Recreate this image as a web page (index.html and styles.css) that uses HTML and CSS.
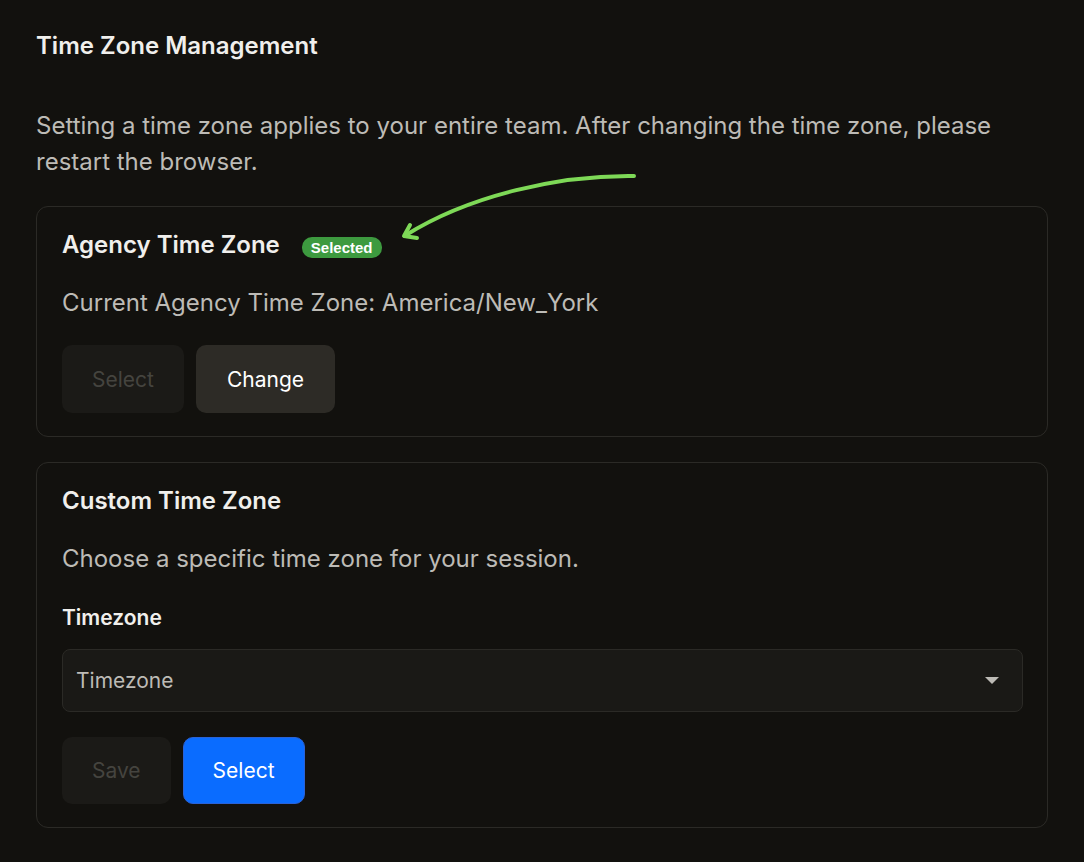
FILE: index.html
```html
<!DOCTYPE html>
<html lang="en">
<head>
    <meta charset="UTF-8">
    <meta name="viewport" content="width=device-width, initial-scale=1.0">
    <title>Time Zone Management</title>
    <link rel="stylesheet" href="styles.css">
</head>
<body>

<div class="page">
    <h1 class="page-title">Time Zone Management</h1>
    <p class="intro">Setting a time zone applies to your entire team. After changing the time zone, please restart the browser.</p>

    <svg class="hint-arrow" width="260" height="85" viewBox="0 0 260 85" fill="none">
        <path d="M244 11 C170 10 80 30 16 70" stroke="#7ed957" stroke-width="4" stroke-linecap="round"/>
        <path d="M20 60 L14 71 L27 73" stroke="#7ed957" stroke-width="4" stroke-linecap="round" stroke-linejoin="round"/>
    </svg>

    <div class="card">
        <div class="card-head">
            <h2>Agency Time Zone</h2>
            <span class="badge">Selected</span>
        </div>
        <p class="card-text">Current Agency Time Zone: America/New_York</p>
        <div class="actions">
            <button class="btn btn-disabled" disabled>Select</button>
            <button class="btn btn-dark">Change</button>
        </div>
    </div>

    <div class="card">
        <div class="card-head">
            <h2>Custom Time Zone</h2>
        </div>
        <p class="card-text">Choose a specific time zone for your session.</p>
        <label class="field-label">Timezone</label>
        <div class="select-box">
            <span>Timezone</span>
            <svg width="14" height="8" viewBox="0 0 14 8"><path d="M0 0 H14 L7 7 Z" fill="#bdbbb6"/></svg>
        </div>
        <div class="actions actions-low">
            <button class="btn btn-disabled btn-save" disabled>Save</button>
            <button class="btn btn-blue">Select</button>
        </div>
    </div>
</div>

</body>
</html>
```

FILE: styles.css
```css
body {
    margin: 0;
    background-color: #12110e;
    font-family: Inter, "Noto Sans", sans-serif;
    color: #f0efec;
}
.page {
    position: relative;
    padding: 32px 36px 34px 36px;
}
.page-title {
    margin: 0;
    font-size: 24px;
    line-height: 28px;
    font-weight: 600;
    color: #f0efec;
}
.intro {
    margin: 48px 0 26px;
    font-size: 24px;
    line-height: 36px;
    color: #bdbbb6;
}
.hint-arrow {
    position: absolute;
    left: 390px;
    top: 165px;
}
.card {
    border: 1px solid #2b2a26;
    border-radius: 12px;
    padding: 24px 24px 23px 25px;
    margin-bottom: 25px;
}
.card-head {
    display: flex;
    align-items: center;
    gap: 22px;
}
.card-head h2 {
    margin: 0;
    font-size: 24px;
    line-height: 28px;
    font-weight: 600;
}
.badge {
    background-color: #3d9a3f;
    color: #ffffff;
    font-family: "Liberation Sans", Arial, sans-serif;
    font-weight: bold;
    font-size: 15px;
    line-height: 21px;
    height: 21px;
    padding: 0 9px;
    border-radius: 10px;
    margin-top: 4px;
}
.card-text {
    margin: 28px 0 0;
    font-size: 24px;
    line-height: 32px;
    color: #bdbbb6;
}
.field-label {
    display: block;
    margin-top: 30px;
    font-size: 21px;
    line-height: 26px;
    font-weight: 600;
}
.select-box {
    margin-top: 18px;
    height: 61px;
    border: 1px solid #2b2a26;
    border-radius: 8px;
    background-color: #1a1916;
    display: flex;
    align-items: center;
    justify-content: space-between;
    padding: 0 23px 0 13px;
    font-size: 21px;
    color: #bdbbb6;
}
.actions {
    display: flex;
    gap: 12px;
    margin-top: 26px;
}
.actions-low {
    margin-top: 25px;
}
.btn {
    height: 68px;
    padding: 0 30px;
    border-radius: 10px;
    border: none;
    font-family: Inter, "Noto Sans", sans-serif;
    font-size: 21px;
    cursor: pointer;
}
.btn-disabled {
    background-color: #1b1a17;
    color: #45443f;
    cursor: default;
}
.btn-save {
    height: 67px;
}
.btn-dark {
    padding: 0 31px;
    background-color: #2d2b26;
    color: #ffffff;
}
.btn-blue {
    height: 67px;
    padding: 0 29px;
    background-color: #0a6cff;
    border: 1px solid #2a62d6;
    color: #ffffff;
}
```
